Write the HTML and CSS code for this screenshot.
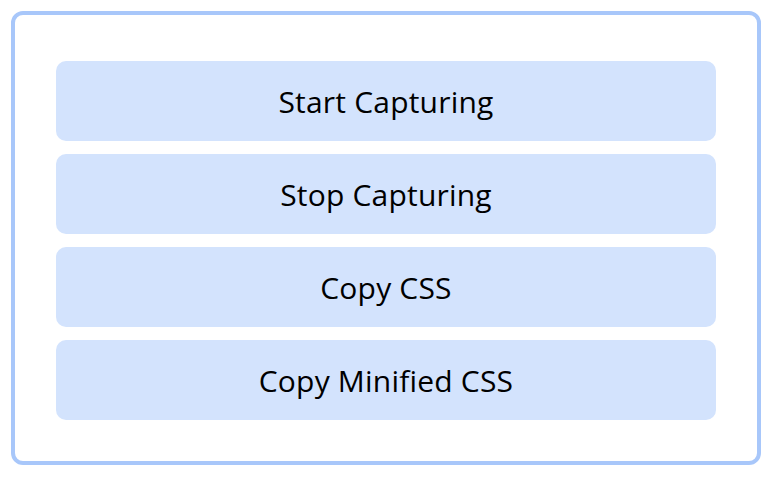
FILE: index.html
```html
<!DOCTYPE html>
<html>
<head>
<meta charset="utf-8">
<link rel="stylesheet" href="styles.css">
</head>
<body>
<div class="panel">
  <button class="btn">Start Capturing</button>
  <button class="btn">Stop Capturing</button>
  <button class="btn">Copy CSS</button>
  <button class="btn">Copy Minified CSS</button>
</div>
</body>
</html>
```
FILE: styles.css
```css
html, body {
  margin: 0;
  padding: 0;
  background: #ffffff;
}
body {
  padding: 11px;
  font-family: "Open Sans", "Noto Sans", sans-serif;
}
.panel {
  width: 750px;
  height: 454px;
  box-sizing: border-box;
  border: 4px solid #a8c7fa;
  border-radius: 12px;
  padding: 46px 41px 41px;
  display: flex;
  flex-direction: column;
  gap: 13px;
}
.btn {
  height: 80px;
  border: none;
  border-radius: 10px;
  background: #d3e3fd;
  color: #000000;
  font-family: "Open Sans", "Noto Sans", sans-serif;
  font-size: 30px;
  letter-spacing: 0.2px;
  padding: 0;
  display: flex;
  align-items: center;
  justify-content: center;
}
```
